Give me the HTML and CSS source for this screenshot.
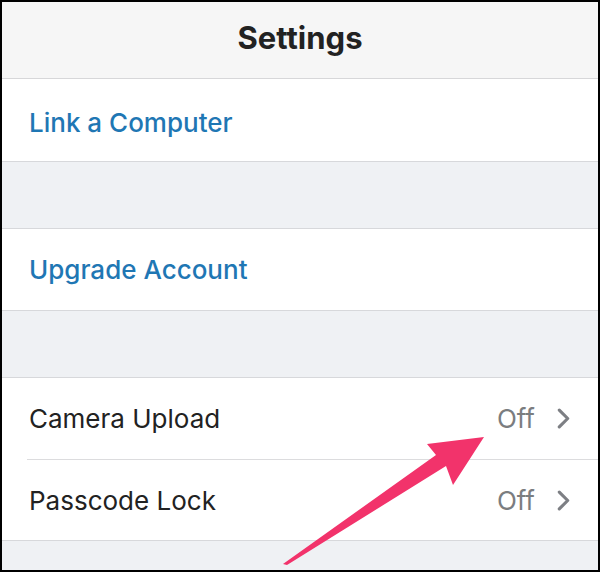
FILE: index.html
```html
<!DOCTYPE html>
<html lang="en">
<head>
    <meta charset="UTF-8">
    <meta name="viewport" content="width=device-width, initial-scale=1.0">
    <title>Settings</title>
    <link rel="stylesheet" href="styles.css">
</head>
<body>
    <div class="screen">
        <header class="nav-bar">
            <h1>Settings</h1>
        </header>

        <div class="group first">
            <a href="#" class="row link">Link a Computer</a>
        </div>

        <div class="spacer"></div>

        <div class="group">
            <a href="#" class="row link">Upgrade Account</a>
        </div>

        <div class="spacer"></div>

        <div class="group">
            <a href="#" class="row">
                <span class="label">Camera Upload</span>
                <span class="value">
                    Off
                    <svg class="chevron" viewBox="0 0 12 20" fill="none" stroke="currentColor" stroke-width="3" stroke-linecap="round" stroke-linejoin="round">
                        <polyline points="2 2 10 10 2 18"></polyline>
                    </svg>
                </span>
            </a>
            <a href="#" class="row">
                <span class="label">Passcode Lock</span>
                <span class="value">
                    Off
                    <svg class="chevron" viewBox="0 0 12 20" fill="none" stroke="currentColor" stroke-width="3" stroke-linecap="round" stroke-linejoin="round">
                        <polyline points="2 2 10 10 2 18"></polyline>
                    </svg>
                </span>
            </a>
        </div>

        <div class="spacer"></div>

        <!-- annotation arrow pointing at the Camera Upload value -->
        <svg class="arrow" viewBox="0 0 596 568">
            <polygon points="281 562 434 453 425 442 482 435 451 483 444 464 285 563"></polygon>
        </svg>
    </div>
</body>
</html>
```

FILE: styles.css
```css
* {
    margin: 0;
    padding: 0;
    box-sizing: border-box;
    font-family: Inter, 'Noto Sans', sans-serif;
}

body {
    background: #000;
    padding: 2px;
    width: 600px;
    height: 572px;
    overflow: hidden;
}

.screen {
    position: relative;
    width: 596px;
    height: 568px;
    background: #eff1f4;
    overflow: hidden;
}

.nav-bar {
    height: 77px;
    padding-bottom: 6px;
    background: #f6f6f6;
    border-bottom: 1px solid #d7d7d9;
    display: flex;
    align-items: center;
    justify-content: center;
}

.nav-bar h1 {
    font-size: 31px;
    font-weight: 700;
    color: #222;
}

.group {
    background: #fff;
    border-top: 1px solid #d7d8db;
    border-bottom: 1px solid #d7d8db;
}

.group.first {
    border-top: none;
}

.group.first .row {
    height: 82px;
    padding-top: 4px;
}

.spacer {
    height: 66px;
}

.row {
    display: flex;
    align-items: center;
    justify-content: space-between;
    height: 81px;
    padding: 0 28px 0 27px;
    text-decoration: none;
    font-size: 26px;
    color: #222;
}

.row + .row {
    border-top: 1px solid #dcdcde;
    margin-left: 25px;
    padding-left: 2px;
}

.row.link {
    color: #1f77b4;
    font-weight: 500;
}

.value {
    display: flex;
    align-items: center;
    gap: 22px;
    color: #7b7d80;
}

.chevron {
    width: 13px;
    height: 21px;
    color: #7d7f84;
}

.arrow {
    position: absolute;
    left: 0;
    top: 0;
    width: 596px;
    height: 568px;
    fill: #f2336b;
    pointer-events: none;
}
```
